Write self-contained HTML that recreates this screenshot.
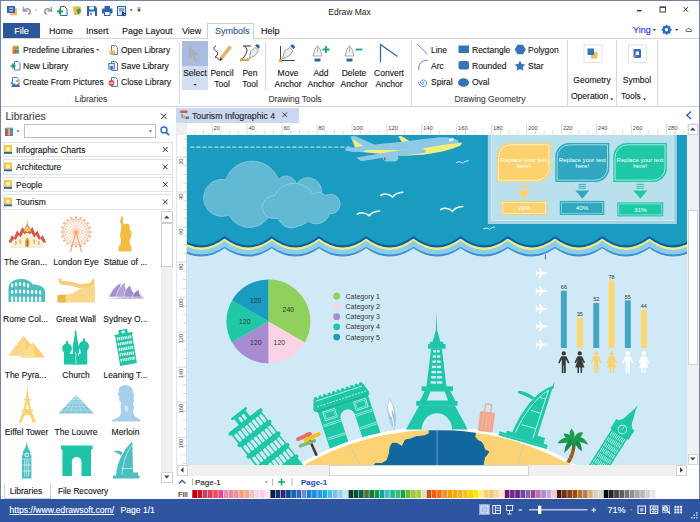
<!DOCTYPE html>
<html><head><meta charset="utf-8"><title>Edraw Max</title>
<style>
*{box-sizing:border-box;margin:0;padding:0}
html,body{width:700px;height:522px;overflow:hidden;background:#fff}
body{position:relative;font-family:"Liberation Sans",sans-serif;font-size:8.5px;color:#161616;}
.a{position:absolute;white-space:nowrap}
.t{position:absolute;white-space:nowrap;line-height:10px;height:10px;-webkit-text-stroke:.12px}
.c{text-align:center}
.sep{position:absolute;width:1px;background:#d8d8d8}
</style></head><body>
<!-- window frame -->
<div class="a" style="left:0;top:0;width:700px;height:522px;border:1px solid #6f82b0"></div>
<!-- title -->
<div class="t c" style="left:299.500px;width:100px;top:7px;font-size:8.500px;-webkit-text-stroke:0">Edraw Max</div>
<!-- menu row -->
<div class="a" style="left:3px;top:23px;width:37px;height:15.300px;background:#2b579a"></div>
<div class="t c" style="left:3px;width:37px;top:26px;color:#fff;font-size:9px">File</div>
<div class="t" style="left:49px;top:26px;font-size:9px">Home</div>
<div class="t" style="left:86px;top:26px;font-size:9px">Insert</div>
<div class="t" style="left:122px;top:26px;font-size:9px">Page Layout</div>
<div class="t" style="left:182px;top:26px;font-size:9px">View</div>
<div class="a" style="left:207px;top:23px;width:47px;height:16px;border:1px solid #d0d0d0;border-bottom:none;background:#fff"></div>
<div class="t" style="left:215px;top:26px;font-size:9px;color:#2b579a">Symbols</div>
<div class="t" style="left:261px;top:26px;font-size:9px">Help</div>
<div class="a" style="left:1px;top:38.300px;width:698px;height:1px;background:#d4d4d4"></div>
<div class="a" style="left:208px;top:38px;width:45px;height:1.500px;background:#fff"></div>
<!-- ribbon placeholder -->

<!-- title bar icons -->
<svg class="a" style="left:0;top:0" width="700" height="40" viewBox="0 0 700 40">
 <!-- edraw logo -->
 <path d="M13 8.300h4v7h-7v-2h3z" fill="#f3bc55"/>
 <rect x="7" y="6" width="8" height="7" fill="#2d66b8"/><rect x="9.200" y="7.600" width="3.800" height="1.200" fill="#c9d8ef"/><rect x="9.200" y="10.200" width="3.800" height="1.200" fill="#c9d8ef"/>
 <!-- undo -->
 <path d="M23.5 7v4h4M24 10.8c1-2.6 5.6-3 6.2 0.4c.3 1.6-.8 2.8-2.2 3.1" fill="none" stroke="#9a9a9a" stroke-width="1.5"/>
 <path d="M34.5 9.5h3l-1.5 1.6z" fill="#aaa"/>
 <!-- redo -->
 <path d="M51.5 7v4h-4M51 10.8c-1-2.6-5.6-3-6.2 0.4c-.3 1.6.8 2.8 2.2 3.1" fill="none" stroke="#9a9a9a" stroke-width="1.5"/>
 <!-- new -->
 <path d="M60.5 6.5h4l2.5 2.5v6.5h-6.5z" fill="#fff" stroke="#2d62b4" stroke-width="1"/>
 <path d="M57 11.5h6M60 8.5v6" stroke="#1aa260" stroke-width="2"/>
 <!-- open -->
 <path d="M72.5 7l5-1 4 1.5-1 7-6 .5z" fill="#f0b84a"/>
 <path d="M76 11l3-3 2.5 3.5-2 .2v2.3h-2v-2.5z" fill="#2a9d57"/>
 <!-- save -->
 <path d="M87 6h8l2 2v8H87z" fill="#2d62b4"/>
 <rect x="89.3" y="6.5" width="4.6" height="3" fill="#fff"/><rect x="89" y="11.5" width="6" height="4.5" fill="#fff"/><rect x="90.3" y="12.6" width="1.4" height="2.4" fill="#2d62b4"/>
 <!-- print -->
 <rect x="104.5" y="6" width="5.5" height="3" fill="#2d62b4"/><rect x="102" y="8.5" width="10.5" height="5" rx="1" fill="#2d62b4"/><rect x="104.5" y="11.5" width="5.5" height="4" fill="#fff" stroke="#2d62b4" stroke-width="1"/>
 <!-- export -->
 <rect x="117.5" y="6.5" width="8" height="9" fill="#dfe8f6" stroke="#2d62b4" stroke-width="1"/><rect x="119" y="8" width="5" height="3.5" fill="#7fa3d8"/><path d="M122 11l4 3-2 .3 .8 1.8-1 .4-.8-1.8-1.2 1z" fill="#1d3f7a"/>
 <path d="M129.7 9.6h3l-1.5 1.7z" fill="#333"/>
 <path d="M137.5 8h3M137.6 9.8h2.8l-1.4 1.6z" stroke="#333" stroke-width=".8" fill="#333"/>
 <!-- window controls -->
 <rect x="637" y="10" width="4.5" height="1.4" fill="#333"/>
 <rect x="660" y="7" width="5.5" height="5" fill="none" stroke="#444" stroke-width="1"/><rect x="660" y="6.6" width="5.5" height="1.3" fill="#444"/>
 <path d="M683.5 7l4.6 4.8M688.1 7l-4.6 4.8" stroke="#333" stroke-width="1"/>
 <!-- ying etc -->
 <path d="M652.7 29h3.2l-1.6 1.9z" fill="#223a80"/>
 <g transform="translate(666.6,29.8)"><circle r="3.1" fill="none" stroke="#2b6cc4" stroke-width="1.9"/><g stroke="#2b6cc4" stroke-width="1.7"><path d="M0-5V5M-5 0H5M-3.5-3.5L3.5 3.5M-3.5 3.5L3.5-3.5"/></g><circle r="1.7" fill="#fff"/><circle r="3" fill="none" stroke="#2b6cc4" stroke-width="1.6"/></g>
 <path d="M675.2 29h3.2l-1.6 1.9z" fill="#223a80"/>
 <path d="M686.2 31.5c-.8-1 0-2.2 1-2 .4-1.400 2.800-1.400 3.200 0 1-.2 1.800 1 1 2z" fill="none" stroke="#444" stroke-width=".8"/>
</svg>
<div class="t" style="left:633px;top:25px;font-size:9px;color:#2a2aff">Ying</div>


<!-- ===== RIBBON ===== -->
<div class="sep" style="left:179px;top:42px;height:62px"></div>
<div class="sep" style="left:265px;top:42px;height:48px"></div>
<div class="sep" style="left:411px;top:40px;height:66px"></div>
<div class="sep" style="left:566.500px;top:40px;height:66px"></div>
<div class="sep" style="left:616px;top:40px;height:66px"></div>
<div class="sep" style="left:656.500px;top:40px;height:66px"></div>
<!-- Libraries group -->
<div class="t" style="left:23px;top:45px">Predefine Libraries</div>
<div class="t" style="left:23px;top:61px">New Library</div>
<div class="t" style="left:23px;top:77px">Create From Pictures</div>
<div class="t" style="left:121px;top:45px">Open Library</div>
<div class="t" style="left:121px;top:61px">Save Library</div>
<div class="t" style="left:121px;top:77px">Close Library</div>
<div class="t c" style="left:61px;width:60px;top:94px;color:#444">Libraries</div>
<!-- select -->
<div class="a" style="left:182px;top:41px;width:26px;height:25px;background:#a9bbde"></div>
<div class="a" style="left:182px;top:66px;width:26px;height:24px;background:#d4def2"></div>
<div class="t c" style="left:175px;width:40px;top:68px">Select</div>
<div class="t c" style="left:202px;width:40px;top:68px">Pencil</div>
<div class="t c" style="left:202px;width:40px;top:79px">Tool</div>
<div class="t c" style="left:230px;width:40px;top:68px">Pen</div>
<div class="t c" style="left:230px;width:40px;top:79px">Tool</div>
<div class="t c" style="left:268px;width:40px;top:68px">Move</div>
<div class="t c" style="left:268px;width:40px;top:79px">Anchor</div>
<div class="t c" style="left:301px;width:40px;top:68px">Add</div>
<div class="t c" style="left:301px;width:40px;top:79px">Anchor</div>
<div class="t c" style="left:334px;width:40px;top:68px">Delete</div>
<div class="t c" style="left:334px;width:40px;top:79px">Anchor</div>
<div class="t c" style="left:369px;width:40px;top:68px">Convert</div>
<div class="t c" style="left:369px;width:40px;top:79px">Anchor</div>
<div class="t c" style="left:255px;width:80px;top:94px;color:#444">Drawing Tools</div>
<!-- geometry -->
<div class="t" style="left:431px;top:45px">Line</div>
<div class="t" style="left:431px;top:61px">Arc</div>
<div class="t" style="left:431px;top:77px">Spiral</div>
<div class="t" style="left:472px;top:45px">Rectangle</div>
<div class="t" style="left:472px;top:61px">Rounded</div>
<div class="t" style="left:472px;top:77px">Oval</div>
<div class="t" style="left:528px;top:45px">Polygon</div>
<div class="t" style="left:528px;top:61px">Star</div>
<div class="t c" style="left:440px;width:100px;top:94px;color:#444">Drawing Geometry</div>
<div class="t c" style="left:567px;width:50px;top:75px">Geometry</div>
<div class="t" style="left:571px;top:91px">Operation</div>
<div class="t c" style="left:612px;width:50px;top:75px">Symbol</div>
<div class="t" style="left:621px;top:91px">Tools</div>
<svg class="a" style="left:0;top:40px" width="700" height="66" viewBox="0 40 700 66">
 <!-- lib icons -->
 <g id="libico">
 <path d="M13.5 45.5h5.500v8h-5.500z" fill="#e9b44c"/><path d="M12.500 46.500h2v7.500h-2z" fill="#c98a2a"/><rect x="14.500" y="50" width="2.200" height="3.500" fill="#d0443c"/><rect x="16.700" y="50" width="2.200" height="3.500" fill="#3a9ad9"/><rect x="15" y="47" width="3.500" height="2.500" fill="#58b368"/>
 </g>
 <!-- new library -->
 <path d="M14.500 61.500h3.500l2 2v6.500h-5.500z" fill="#fff" stroke="#3a6fc0" stroke-width=".9"/><path d="M10.500 66h5M13 63.500v5" stroke="#1aa260" stroke-width="1.700"/>
 <!-- create from pictures -->
 <path d="M12.500 77.500h4.500l2 2v7h-6.500z" fill="#fff" stroke="#3a6fc0" stroke-width=".9"/><path d="M11 87l3-4 2 2 2-1.500 2 3.500z" fill="#3a6fc0"/><circle cx="17" cy="81" r="1.300" fill="#e9a23b"/><path d="M10.500 83l2-2v4z" fill="#2aa568"/>
 <!-- open library -->
 <path d="M111.500 45.500h4l2 2v7h-6z" fill="#fff" stroke="#3a6fc0" stroke-width=".9"/><rect x="109.500" y="50.500" width="5.500" height="4" fill="#f0b84a"/>
 <!-- save library -->
 <path d="M111.500 61.500h4l2 2v7h-6z" fill="#fff" stroke="#3a6fc0" stroke-width=".9"/><rect x="108.800" y="63.500" width="5.500" height="5.500" fill="#dce6f5" stroke="#3a6fc0" stroke-width=".9"/><rect x="110.300" y="66" width="2.500" height="3" fill="#3a6fc0"/>
 <!-- close library -->
 <path d="M111.500 77.500h4l2 2v7h-6z" fill="#fff" stroke="#3a6fc0" stroke-width=".9"/><circle cx="111.500" cy="83" r="2.900" fill="#e0454f"/><rect x="109.700" y="82.500" width="3.600" height="1.100" fill="#fff"/>
 <path d="M96.200 49h3l-1.500 1.700z" fill="#333"/>
 <!-- select arrow -->
 <path d="M188.500 44.500v16l4-3.800 2.700 5.800 2.300-1-2.700-5.600 5.500-.4z" fill="#aab0bb" stroke="#b9c0cc" stroke-width=".6"/>
 <path d="M193.500 84h3.200l-1.600 1.800z" fill="#223"/>
 <!-- pencil -->
 <path d="M216 46c-3 1-2.500 4 0 5 3 1.500 1.500 5 -1 6 2 .5 3.500 1.500 4.500 3" fill="none" stroke="#333" stroke-width="1"/>
 <path d="M229 45.500l3 2-9.500 12-3.300 1.500 .6-3.600z" fill="#e4b062"/><path d="M219.600 61l.7-3.600 2.400 2z" fill="#333"/>
 <!-- pen tool -->
 <path d="M243 46h8M244 46c6 3 2 10-3.500 14" fill="none" stroke="#333" stroke-width="1"/>
 <path d="M240 60h9" stroke="#333" stroke-width=".8"/><rect x="240" y="58.500" width="2.600" height="2.600" fill="#f0a020"/><rect x="246.500" y="58.500" width="2.600" height="2.600" fill="#f0a020"/>
 <path d="M249.500 58.500l1-7 4.500-4 3.500 3-3.500 5z" fill="#eee" stroke="#888" stroke-width=".8"/><path d="M255 45.500l2.500-1.500 2.500 2.500-1.500 2.500z" fill="#2d62b4"/>
 <!-- move anchor -->
 <path d="M280.500 46v14.500H295" fill="none" stroke="#444" stroke-width="1"/><rect x="279" y="59" width="3" height="3" fill="#f0a020"/>
 <path d="M282.500 59l2-8 5.500-3.500 3 3.500-4 5z" fill="#eee" stroke="#888" stroke-width=".8"/><path d="M290 45.500l2.800-1.300 2.400 2.800-1.700 2.200z" fill="#2d62b4"/>
 <!-- add anchor -->
 <path d="M313 56l1.800-6.500 2.700-4 2.700 4 1.800 6.500z" fill="#f2f2f2" stroke="#999" stroke-width=".8"/><path d="M317.500 47v5" stroke="#999" stroke-width=".7"/><rect x="314.500" y="58.500" width="6" height="3" fill="#2d62b4"/>
 <path d="M322.500 49.500h7M326 46v7" stroke="#17a589" stroke-width="1.800"/>
 <!-- delete anchor -->
 <path d="M345 56l1.800-6.500 2.700-4 2.700 4 1.800 6.500z" fill="#f2f2f2" stroke="#999" stroke-width=".8"/><path d="M349.500 47v5" stroke="#999" stroke-width=".7"/><rect x="346.500" y="58.500" width="6" height="3" fill="#2d62b4"/>
 <path d="M355.500 49.500h7" stroke="#17a589" stroke-width="1.800"/>
 <!-- convert anchor -->
 <path d="M380.500 62.500v-18l17 12" fill="none" stroke="#2e62ad" stroke-width="1.200"/>
 <!-- geometry icons -->
 <path d="M417.500 44.500l10 9.500" stroke="#3a6fc0" stroke-width=".8"/>
 <path d="M419 70c-1.500-5 3-10.500 8.500-9.500" fill="none" stroke="#3a6fc0" stroke-width=".9"/>
 <path d="M422.500 82.500c.8-.8 2 .4 1 1.300-1.400 1.200-3.400-.3-2.800-2 .8-2.200 4-2.300 5.300-.3 1.400 2.300-.4 5-3 5-2.700 0-4.700-2.300-4.300-4.700" fill="none" stroke="#3a6fc0" stroke-width=".8"/>
 <rect x="458.500" y="45.500" width="10.500" height="7.500" fill="#3674b8"/>
 <rect x="458.500" y="61" width="10.500" height="8.500" rx="2" fill="#3674b8"/>
 <ellipse cx="463.500" cy="82.500" rx="5.500" ry="4.300" fill="#3674b8"/>
 <path d="M517.500 44.800h5.500l2.800 4.700-2.800 4.700h-5.500l-2.800-4.700z" fill="#3674b8"/>
 <path d="M520 60.500l1.650 3.400 3.750.5-2.700 2.650.65 3.750-3.350-1.800-3.350 1.800.65-3.750-2.700-2.650 3.750-.5z" fill="#3674b8"/>
 <!-- geometry operation -->
 <rect x="584" y="45" width="18" height="17.500" fill="#fff" stroke="#ddd" stroke-width=".8"/>
 <rect x="591" y="52" width="6.500" height="6.500" fill="#f0c060"/><rect x="587.500" y="48.500" width="6.500" height="6.500" fill="#3674b8"/>
 <path d="M610.200 98.500h3.200l-1.600 1.800z" fill="#223"/>
 <!-- symbol tools -->
 <rect x="628.500" y="45" width="18" height="17.500" fill="#fff" stroke="#ddd" stroke-width=".8"/>
 <rect x="633.500" y="49" width="7.500" height="9" rx="1.300" fill="#2e6fc9"/><path d="M636 51.500h3v3.500h-3.500z" fill="#fff"/><path d="M632.500 56.500l3-1.500v2.500z" fill="#f0a020"/>
 <path d="M643 98.500h3.200l-1.600 1.800z" fill="#223"/>
</svg>

<div class="a" style="left:1px;top:106px;width:698px;height:1px;background:#d0d0d0"></div>
<!-- left panel -->

<!-- ===== LEFT PANEL ===== -->
<div class="t" style="left:5.500px;top:110px;font-size:10.500px;line-height:12px;height:12px;color:#444">Libraries</div>
<div class="a" style="left:24px;top:124px;width:132px;height:14px;border:1px solid #bdbdbd;background:#fff"></div>
<div class="a" style="left:2.500px;top:141.500px;width:170px;height:15.500px;border:1px solid #e2e2e2;background:#fff"></div>
<div class="a" style="left:2.500px;top:159px;width:170px;height:15.500px;border:1px solid #e2e2e2;background:#fff"></div>
<div class="a" style="left:2.500px;top:176.500px;width:170px;height:15.500px;border:1px solid #e2e2e2;background:#fff"></div>
<div class="a" style="left:2.500px;top:194px;width:170px;height:15.500px;border:1px solid #e2e2e2;background:#fff"></div>
<div class="t" style="left:16px;top:144.500px">Infographic Charts</div>
<div class="t" style="left:16px;top:162px">Architecture</div>
<div class="t" style="left:16px;top:179.500px">People</div>
<div class="t" style="left:16px;top:197px">Tourism</div>
<!-- scrollbar -->
<div class="a" style="left:161px;top:211px;width:11.500px;height:272px;background:#f0f0f0"></div>
<div class="a" style="left:161px;top:211px;width:11.500px;height:12px;background:#fff;border:1px solid #d0d0d0"></div>
<div class="a" style="left:161px;top:222.500px;width:11.500px;height:44.500px;background:#fff;border:1px solid #d0d0d0"></div>
<div class="a" style="left:161px;top:471.500px;width:11.500px;height:11.500px;background:#fff;border:1px solid #d0d0d0"></div>
<!-- labels -->
<div class="t c" style="left:0;width:51px;top:256.800px">The Gran...</div>
<div class="t c" style="left:50px;width:52px;top:256.800px">London Eye</div>
<div class="t c" style="left:100px;width:51px;top:256.800px">Statue of ...</div>
<div class="t c" style="left:0;width:51px;top:314px">Rome Col...</div>
<div class="t c" style="left:50px;width:52px;top:314px">Great Wall</div>
<div class="t c" style="left:100px;width:51px;top:314px">Sydney O...</div>
<div class="t c" style="left:0;width:51px;top:370px">The Pyra...</div>
<div class="t c" style="left:50px;width:52px;top:370px">Church</div>
<div class="t c" style="left:100px;width:51px;top:370px">Leaning T...</div>
<div class="t c" style="left:0;width:53px;top:427px">Eiffel Tower</div>
<div class="t c" style="left:50px;width:52px;top:427px">The Louvre</div>
<div class="t c" style="left:100px;width:51px;top:427px">Merloin</div>
<!-- bottom tabs -->
<div class="a" style="left:4px;top:483px;width:47px;height:16px;border:1px solid #d0d0d0;border-top:none;background:#fff"></div>
<div class="t c" style="left:2.500px;width:47px;top:486px">Libraries</div>
<div class="t" style="left:58px;top:485.500px;font-size:8.300px;letter-spacing:-.05px">File Recovery</div>
<svg class="a" style="left:0;top:108px" width="176" height="391" viewBox="0 108 176 391">
 <!-- panel close -->
 <path d="M161 113.500l5.500 5.500M166.500 113.500l-5.500 5.500" stroke="#333" stroke-width="1"/>
 <!-- lib icon -->
 <rect x="5" y="128" width="8" height="8" fill="#3a6fc0"/><rect x="5.500" y="130" width="2.300" height="5.500" fill="#e04a4a"/><rect x="7.800" y="129" width="2.300" height="6.500" fill="#f0b030"/><rect x="10.100" y="130" width="2.400" height="5.500" fill="#5a8fd8"/><path d="M5 128l3-1.500 2 1 3-1v2H5z" fill="#c8d4ea"/>
 <path d="M16.500 130.500h3l-1.500 1.700z" fill="#444"/>
 <path d="M149 130.500h3l-1.500 1.700z" fill="#444"/>
 <circle cx="164" cy="130" r="3" fill="none" stroke="#2b6cc4" stroke-width="1.400"/><path d="M166.200 132.300l2.800 2.900" stroke="#2b6cc4" stroke-width="1.800"/>
 <!-- row icons -->
 <g id="ri"><rect x="4" y="145" width="8" height="8.500" fill="#f3c64e"/><rect x="4" y="152" width="8" height="1.800" fill="#2d62b4"/><path d="M6.200 147h3.600v3l-1.800 1.200-1.800-1.200z" fill="#fdf3d0"/></g>
 <use href="#ri" y="17.500"/><use href="#ri" y="35"/><use href="#ri" y="52.500"/>
 <g stroke="#333" stroke-width="1"><path d="M163 147l4.600 4.800M167.600 147l-4.600 4.800"/><path d="M163 164.500l4.600 4.800M167.600 164.500l-4.600 4.800"/><path d="M163 182l4.600 4.800M167.600 182l-4.600 4.800"/><path d="M163 199.500l4.600 4.800M167.600 199.500l-4.600 4.800"/></g>
 <path d="M164 218.500h5.500l-2.750-3z" fill="#444"/>
 <path d="M164 475.500h5.500l-2.750 3z" fill="#444"/>
 <g id="thumbs">
 <!-- grand palace -->
 <path d="M10.500 246.300h33.500v1.300H10.500z" fill="#f3dcb4"/>
 <path d="M8.800 241.500l3.200-6.500 2 2.800 3-7.300 2.500 3 2.700-6.500 2 2.500 3.100-6 3.100 6 2-2.500 2.700 6.500 2.500-3 3 7.300 2-2.800 3.200 6.500z" fill="#d9534f"/>
 <path d="M12 246.500v-5.500l2.500-2.500 1 1.500 3-5 2 2.500 2.800-5 1.500 2 2.500-4.500 2.500 4.500 1.500-2 2.800 5 2-2.500 3 5 1-1.500 2.500 2.500v5.500z" fill="#fdf0dc"/>
 <path d="M27.300 219.500l.9 5.500h-1.800z" fill="#f0b84a"/>
 <path d="M23.300 231.500l4-6.500 4 6.500z" fill="#f6c860"/>
 <rect x="24.500" y="231.800" width="5.600" height="1.300" fill="#b07a28"/>
 <path d="M25.300 246.500v-6.500l2-2.500 2 2.500v6.500z" fill="#e0a038"/><rect x="26.600" y="240.500" width="1.400" height="6" fill="#a86a1c"/>
 <g fill="#f0b84a"><rect x="15" y="241" width="1.800" height="3.800"/><rect x="19.500" y="239.500" width="1.800" height="4"/><rect x="33.300" y="239.500" width="1.800" height="4"/><rect x="37.800" y="241" width="1.800" height="3.800"/></g>
 <g fill="#d9534f"><path d="M8.500 242.500l1.800-3.500 1.800 3.500z"/><path d="M42.500 242.500l1.800-3.500 1.800 3.500z"/></g>
 <!-- london eye -->
 <g fill="none" stroke="#f2a877" stroke-width=".8"><circle cx="76" cy="232" r="13"/><circle cx="76" cy="232" r="11" stroke-width=".5"/><path d="M76 232L88.0 232.0M76 232L87.6 235.1M76 232L86.4 238.0M76 232L84.5 240.5M76 232L82.0 242.4M76 232L79.1 243.6M76 232L76.0 244.0M76 232L72.9 243.6M76 232L70.0 242.4M76 232L67.5 240.5M76 232L65.6 238.0M76 232L64.4 235.1M76 232L64.0 232.0M76 232L64.4 228.9M76 232L65.6 226.0M76 232L67.5 223.5M76 232L70.0 221.6M76 232L72.9 220.4M76 232L76.0 220.0M76 232L79.1 220.4M76 232L82.0 221.6M76 232L84.5 223.5M76 232L86.4 226.0M76 232L87.6 228.9" stroke-width=".45"/></g><circle cx="90.6" cy="232.0" r="1.1" fill="#f2a877"/><circle cx="89.9" cy="236.5" r="1.1" fill="#f2a877"/><circle cx="87.8" cy="240.6" r="1.1" fill="#f2a877"/><circle cx="84.6" cy="243.8" r="1.1" fill="#f2a877"/><circle cx="80.5" cy="245.9" r="1.1" fill="#f2a877"/><circle cx="76.0" cy="246.6" r="1.1" fill="#f2a877"/><circle cx="71.5" cy="245.9" r="1.1" fill="#f2a877"/><circle cx="67.4" cy="243.8" r="1.1" fill="#f2a877"/><circle cx="64.2" cy="240.6" r="1.1" fill="#f2a877"/><circle cx="62.1" cy="236.5" r="1.1" fill="#f2a877"/><circle cx="61.4" cy="232.0" r="1.1" fill="#f2a877"/><circle cx="62.1" cy="227.5" r="1.1" fill="#f2a877"/><circle cx="64.2" cy="223.4" r="1.1" fill="#f2a877"/><circle cx="67.4" cy="220.2" r="1.1" fill="#f2a877"/><circle cx="71.5" cy="218.1" r="1.1" fill="#f2a877"/><circle cx="76.0" cy="217.4" r="1.1" fill="#f2a877"/><circle cx="80.5" cy="218.1" r="1.1" fill="#f2a877"/><circle cx="84.6" cy="220.2" r="1.1" fill="#f2a877"/><circle cx="87.8" cy="223.4" r="1.1" fill="#f2a877"/><circle cx="89.9" cy="227.5" r="1.1" fill="#f2a877"/><path d="M76 232L70.5 252M76 232L81.5 252" stroke="#f2a877" stroke-width="1.2"/><circle cx="76" cy="232" r="1.6" fill="#f2a877"/>
 <!-- statue of liberty -->
 <path d="M121.500 216l1.500 1v6l1.500 1.500 2-1 2 .5 1.500 2.500-.5 2.500 2 3-.5 5-1.500 4 .5 4 1.500 1v5.500h-13v-5.500l2-1 .5-5-1-5 1-6 .5-4-1.500-3.500z" fill="#f6bb42"/>
 <!-- colosseum -->
 <path d="M8.500 302v-14c0-5 5-9 12-9 6 0 10 2 12.500 5.500 6 0 12 2 12 7.500v10z" fill="#4bbfc0"/>
 <g fill="#fff"><rect x="11" y="283.500" width="2.200" height="4" rx="1"/><rect x="15" y="282.500" width="2.200" height="4" rx="1"/><rect x="19" y="282" width="2.200" height="4" rx="1"/><rect x="23" y="282.500" width="2.200" height="4" rx="1"/><rect x="27" y="283.500" width="2.200" height="4" rx="1"/>
 <rect x="11" y="290" width="2.200" height="4" rx="1"/><rect x="15" y="289.500" width="2.200" height="4" rx="1"/><rect x="19" y="289.500" width="2.200" height="4" rx="1"/><rect x="23" y="289.500" width="2.200" height="4" rx="1"/><rect x="27" y="290" width="2.200" height="4" rx="1"/><rect x="31" y="290" width="2.200" height="4" rx="1"/><rect x="35" y="290" width="2.200" height="4" rx="1"/><rect x="39" y="290.500" width="2.200" height="4" rx="1"/>
 <rect x="11" y="296.500" width="2.200" height="5.500" rx="1"/><rect x="15" y="296.500" width="2.200" height="5.500" rx="1"/><rect x="19" y="296.500" width="2.200" height="5.500" rx="1"/><rect x="23" y="296.500" width="2.200" height="5.500" rx="1"/><rect x="27" y="296.500" width="2.200" height="5.500" rx="1"/><rect x="31" y="296.500" width="2.200" height="5.500" rx="1"/><rect x="35" y="296.500" width="2.200" height="5.500" rx="1"/><rect x="39" y="296.500" width="2.200" height="5.500" rx="1"/></g>
 <!-- great wall -->
 <path d="M57.500 295l14-1 8-5 13.500-4.500 2 .5v17.500H57.500z" fill="#f9d88c"/>
 <path d="M57.500 295h8v7.500h-8z" fill="#e8b84e"/>
 <path d="M58 279l2.500-.8 1 2.500 10 1 8 2.500 9-1 3-1.500v-2.500l1.500.5.500-1 1 .5v5l-6 3-9 1-8-2.500-10-1-2.500-2z" fill="#f6cd7a"/>
 <!-- sydney opera -->
 <path d="M107.500 298.500h36v-1l-7-1.500z" fill="#a68fd0"/>
 <g stroke="#fff" stroke-width=".5"><path d="M109 297c2-6 6-11 12-14-1 5-1 9 0 14z" fill="#a68fd0"/><path d="M116 297c1-6 4-11 9-15 0 5 1 10 4 15z" fill="#b49fdb"/><path d="M124 297c0-5 2-9 6-12 1 4 3 8 7 12z" fill="#a68fd0"/><path d="M132 297c1-3 3-6 7-7.500-.5 3 1 5.500 3.500 7.500z" fill="#9a82c8"/></g>
 <!-- pyramids -->
 <path d="M8.500 355.500l15-19.500 12 13.500-9.500 6z" fill="#fbd174"/><path d="M23.500 336l3 19.500h-18z" fill="#fcd98a"/>
 <path d="M20.500 357.500l12.500-15 12 15z" fill="#fbd174"/><path d="M33 342.500l2 15h-14.500z" fill="#fcdc92"/>
 <!-- church -->
 <g fill="#1fc3a5">
 <path d="M75.700 329l.5 2.500.9.600-.7.800 2.200 13.500h-5.800l2.200-13.500-.7-.800.900-.600z"/>
 <rect x="72.800" y="346" width="6.400" height="18.500"/>
 <path d="M67.900 341.300l.4 2.300c2 .6 3.600 2.600 3.600 4.900 0 1.700-.8 3-1.700 3.700v12.300h-6.300v-12.300c-.900-.700-1.700-2-1.700-3.700 0-2.300 1.600-4.300 3.600-4.900l.4-2.300.85-.6z"/>
 <path d="M84.700 338.500l.4 2.600c2.200.6 3.900 2.700 3.900 5.200 0 1.700-.8 3.100-1.700 3.900v14.300h-6.800v-14.300c-.900-.800-1.700-2.200-1.700-3.900 0-2.500 1.700-4.600 3.900-5.200l.4-2.600.8-.6z"/>
 <rect x="70" y="354" width="11" height="10.500"/>
 </g>
 <path d="M75.200 352l.8 3-.6 3 .7 3-.3 3.500M78.300 353l.5 3" stroke="#fff" stroke-width=".6" fill="none"/>
 <!-- leaning tower -->
 <g transform="rotate(-9.500 128.500 364.300)">
 <rect x="120" y="333.500" width="17" height="31" fill="#1fc3a5"/>
 <rect x="124" y="329" width="9" height="5" fill="#1fc3a5"/>
 <rect x="119.300" y="333" width="18.400" height="1.600" fill="#1fc3a5"/>
 <rect x="127" y="330.300" width="3" height="2.500" fill="#fff"/>
 <g fill="#fff"><rect x="121.300" y="336" width="14.400" height="3"/><rect x="121.300" y="341.400" width="14.400" height="3"/><rect x="121.300" y="346.800" width="14.400" height="3"/><rect x="121.300" y="352.200" width="14.400" height="3"/><rect x="121.300" y="357.600" width="14.400" height="3"/></g>
 <path d="M123.100 335.500v26M124.900 335.500v26M126.700 335.500v26M128.500 335.500v26M130.300 335.500v26M132.100 335.500v26M133.900 335.500v26" stroke="#1fc3a5" stroke-width=".7"/>
 </g>
 <!-- eiffel -->
 <path d="M27.300 385l.5 6 1.200 8h1.500v1.500h-1.200l1.700 9h2v1.500h-1.600l4.600 11.500h-3.500c-1-5-2.500-8-5.200-8s-4.200 3-5.200 8h-3.500l4.600-11.500h-1.600v-1.500h2l1.700-9h-1.200v-1.500h1.500l1.200-8z" fill="#fbd174"/>
 <path d="M27.300 403l1.500 6h-3z" fill="#fff"/>
 <!-- louvre -->
 <path d="M58.500 413.500l17.500-18.500 18 18.500z" fill="#86c8dc"/>
 <g stroke="#fff" stroke-width=".35" opacity=".8"><path d="M76 395l-12 18.500M76 395l-6 18.500M76 395v18.500M76 395l6 18.500M76 395l12 18.500M72 399.500h8M68.500 403h15M65.500 406.500h21M62 410h28"/></g>
 <!-- merlion -->
 <path d="M119 388c2-3 7-4 10-2 3 1 4.500 4 4 7l1.500 2-1 3 1 3-1.500 2.500 1 3.500-1 5 1.500 4 6 4v1.500h-28.500v-1.500l7-3 2.500-5-1-5 1-4-2.500-3 .5-3.500-2-2 1.500-3.500z" fill="#a5cfea"/>
 <path d="M124 406c2-1 4 0 4.500 2s-1 4-3 4z" fill="#d4e8f6"/>
 <!-- big ben -->
 <path d="M26.800 441.500l.8 5 2.800 5.500v3h1v23.500h-9.500v-23.500h1v-3l2.800-5.500z" fill="#4bbfc0"/>
 <circle cx="26.800" cy="455" r="2.300" fill="#fff"/><circle cx="26.800" cy="455" r="1.500" fill="#4bbfc0"/>
 <g stroke="#fff" stroke-width=".6"><path d="M24.800 460v16.500M26.800 460v16.500M28.800 460v16.500M22.500 459h8.500M22.500 465h8.500M22.500 471h8.500"/></g>
 <!-- arc de triomphe -->
 <path d="M61 445.500h31.500v4h-1.500v26.500h-9.500v-14c0-3-2-5-4.800-5s-4.800 2-4.800 5v14h-9.500v-26.500H61z" fill="#1fc3a5"/>
 <!-- burj al arab -->
 <path d="M132.300 441.500l.7 31h5v3h1.500v3h-26.500v-3h3c1-12 6-24 16.300-34z" fill="#4bbfc0"/>
 <path d="M113.500 451.500c3-1.500 7-1 9 1l-1.500 3c-2-2-5-3-7.500-4z" fill="#4bbfc0"/>
 <g stroke="#fff" stroke-width=".6" opacity=".9" fill="none"><path d="M121.500 468.500h11M132 445c-6 8-9 18-10 30"/></g>
</g>
</svg>

<!-- doc area -->
<div class="a" style="left:175.500px;top:108px;width:123.500px;height:14.500px;background:#ccd8f0"></div>
<div class="t" style="left:192px;top:110.500px;font-size:8.700px;color:#222">Tourism Infographic 4</div>
<div class="a" style="left:176px;top:123px;width:511px;height:11.500px;background:#fff"></div>
<div class="a" style="left:176px;top:123px;width:11px;height:11.500px;background:#eee"></div>
<div class="a" style="left:176px;top:134.500px;width:10.700px;height:330px;background:#fff;border-left:1px solid #e4e4e4;border-right:1px solid #e0e0e0"></div>
<div class="a" style="left:687px;top:123px;width:11.500px;height:342px;background:#f0f0f0"></div>
<div class="a" style="left:687.500px;top:123.500px;width:10.500px;height:11px;background:#fff;border:1px solid #d4d4d4"></div>
<div class="a" style="left:687.500px;top:209.500px;width:10.500px;height:155.500px;background:#fff;border:1px solid #d4d4d4"></div>
<div class="a" style="left:687.500px;top:453.500px;width:10.500px;height:11px;background:#fff;border:1px solid #d4d4d4"></div>
<div class="a" style="left:176px;top:464.500px;width:511px;height:11px;background:#f0f0f0"></div>
<div class="a" style="left:176.500px;top:464.500px;width:11px;height:11px;background:#fff;border:1px solid #d4d4d4"></div>
<div class="a" style="left:328.500px;top:464.500px;width:200.500px;height:11px;background:#fff;border:1px solid #d4d4d4"></div>
<div class="a" style="left:676px;top:464.500px;width:11px;height:11px;background:#fff;border:1px solid #d4d4d4"></div>
<div class="t" style="left:195px;top:478px;font-size:8px;color:#222">Page-1</div>
<div class="t" style="left:301px;top:478px;font-size:8px;color:#2b57c0;font-weight:bold">Page-1</div>
<div class="t" style="left:178px;top:489.500px;font-size:7.500px;color:#222">Fill</div>
<svg class="a" style="left:170px;top:106px" width="530" height="416" viewBox="170 106 530 416"><rect x="180" y="110.500" width="7.500" height="2.600" rx=".8" fill="#d0595a"/><rect x="181.500" y="114" width="1.200" height="4" fill="#2aa568"/><rect x="182.500" y="115.500" width="3" height="3" fill="#f0b030"/><rect x="185.500" y="116.500" width="3.500" height="2.500" fill="#3a7be0"/><path d="M282.500 112.500l4.500 4.600M287 112.500l-4.500 4.600" stroke="#333" stroke-width=".9"/><path d="M691.200 111.600l-4.400 3.700 4.400 3.700" fill="none" stroke="#2b57a8" stroke-width="1.300"/><path d="M194.7 130.500V134.500M203.5 130.500V134.500M212.2 124V134.500M220.9 130.500V134.500M229.7 130.500V134.500M238.4 130.500V134.500M247.1 124V134.500M255.9 130.500V134.500M264.6 130.500V134.500M273.3 130.500V134.500M282.1 124V134.500M290.8 130.500V134.500M299.5 130.500V134.500M308.3 130.500V134.500M317.0 124V134.500M325.8 130.500V134.500M334.5 130.500V134.500M343.2 130.500V134.500M352.0 124V134.500M360.7 130.500V134.500M369.4 130.500V134.500M378.2 130.500V134.500M386.9 124V134.500M395.6 130.500V134.500M404.4 130.500V134.500M413.1 130.500V134.500M421.8 124V134.500M430.6 130.500V134.500M439.3 130.500V134.500M448.0 130.500V134.500M456.8 124V134.500M465.5 130.500V134.500M474.2 130.500V134.500M483.0 130.500V134.500M491.7 124V134.500M500.5 130.500V134.500M509.2 130.500V134.500M517.9 130.500V134.500M526.7 124V134.500M535.4 130.500V134.500M544.1 130.500V134.500M552.9 130.500V134.500M561.6 124V134.500M570.3 130.500V134.500M579.1 130.500V134.500M587.8 130.500V134.500M596.5 124V134.500M605.3 130.500V134.500M614.0 130.500V134.500M622.7 130.500V134.500M631.5 124V134.500M640.2 130.500V134.500M649.0 130.500V134.500M657.7 130.500V134.500M666.4 124V134.500M675.2 130.500V134.500M683.9 130.500V134.500" stroke="#c8c8c8" stroke-width=".7"/><text x="213.5" y="130" font-size="5.800" fill="#484848" font-family="Liberation Sans, sans-serif">20</text><text x="248.4" y="130" font-size="5.800" fill="#484848" font-family="Liberation Sans, sans-serif">40</text><text x="283.4" y="130" font-size="5.800" fill="#484848" font-family="Liberation Sans, sans-serif">60</text><text x="318.3" y="130" font-size="5.800" fill="#484848" font-family="Liberation Sans, sans-serif">80</text><text x="353.3" y="130" font-size="5.800" fill="#484848" font-family="Liberation Sans, sans-serif">100</text><text x="388.2" y="130" font-size="5.800" fill="#484848" font-family="Liberation Sans, sans-serif">120</text><text x="423.1" y="130" font-size="5.800" fill="#484848" font-family="Liberation Sans, sans-serif">140</text><text x="458.1" y="130" font-size="5.800" fill="#484848" font-family="Liberation Sans, sans-serif">160</text><text x="493.0" y="130" font-size="5.800" fill="#484848" font-family="Liberation Sans, sans-serif">180</text><text x="528.0" y="130" font-size="5.800" fill="#484848" font-family="Liberation Sans, sans-serif">200</text><text x="562.9" y="130" font-size="5.800" fill="#484848" font-family="Liberation Sans, sans-serif">220</text><text x="597.8" y="130" font-size="5.800" fill="#484848" font-family="Liberation Sans, sans-serif">240</text><text x="632.8" y="130" font-size="5.800" fill="#484848" font-family="Liberation Sans, sans-serif">260</text><text x="667.7" y="130" font-size="5.800" fill="#484848" font-family="Liberation Sans, sans-serif">280</text><path d="M183 139.4H187M183 148.2H187M177 156.9H187M183 165.7H187M183 174.5H187M183 183.2H187M177 192.0H187M183 200.8H187M183 209.5H187M183 218.3H187M177 227.1H187M183 235.8H187M183 244.6H187M183 253.3H187M177 262.1H187M183 270.9H187M183 279.6H187M183 288.4H187M177 297.1H187M183 305.9H187M183 314.7H187M183 323.4H187M177 332.2H187M183 341.0H187M183 349.7H187M183 358.5H187M177 367.2H187M183 376.0H187M183 384.8H187M183 393.5H187M177 402.3H187M183 411.1H187M183 419.8H187M183 428.6H187M177 437.3H187M183 446.1H187M183 454.9H187M183 463.6H187" stroke="#c8c8c8" stroke-width=".7"/><text transform="translate(182.800 158.4) rotate(-90)" text-anchor="end" font-size="5.800" fill="#484848" font-family="Liberation Sans, sans-serif">20</text><text transform="translate(182.800 193.5) rotate(-90)" text-anchor="end" font-size="5.800" fill="#484848" font-family="Liberation Sans, sans-serif">40</text><text transform="translate(182.800 228.6) rotate(-90)" text-anchor="end" font-size="5.800" fill="#484848" font-family="Liberation Sans, sans-serif">60</text><text transform="translate(182.800 263.6) rotate(-90)" text-anchor="end" font-size="5.800" fill="#484848" font-family="Liberation Sans, sans-serif">80</text><text transform="translate(182.800 298.6) rotate(-90)" text-anchor="end" font-size="5.800" fill="#484848" font-family="Liberation Sans, sans-serif">100</text><text transform="translate(182.800 333.7) rotate(-90)" text-anchor="end" font-size="5.800" fill="#484848" font-family="Liberation Sans, sans-serif">120</text><text transform="translate(182.800 368.8) rotate(-90)" text-anchor="end" font-size="5.800" fill="#484848" font-family="Liberation Sans, sans-serif">140</text><text transform="translate(182.800 403.8) rotate(-90)" text-anchor="end" font-size="5.800" fill="#484848" font-family="Liberation Sans, sans-serif">160</text><text transform="translate(182.800 438.8) rotate(-90)" text-anchor="end" font-size="5.800" fill="#484848" font-family="Liberation Sans, sans-serif">180</text><path d="M690 130.500h5.500l-2.750-3z" fill="#444"/><path d="M690 457.500h5.500l-2.750 3z" fill="#444"/><path d="M183.500 467.300v5.500l-3-2.750z" fill="#444"/><path d="M680 467.300v5.500l3-2.750z" fill="#444"/><path d="M179 483.500l3.200-3.200 3.200 3.200" fill="none" stroke="#2b57a8" stroke-width="1.300"/><path d="M192.500 478.500v7M272.500 478.500v7M292 478.500v7" stroke="#999" stroke-width=".7"/><path d="M265 481.500h2.600l-1.300 1.500z" fill="#555"/><path d="M278 482h7M281.500 478.500v7" stroke="#1aa260" stroke-width="1.500"/><rect x="192.30" y="490" width="4.71" height="8" fill="#c0000e"/><rect x="197.51" y="490" width="4.71" height="8" fill="#d8101e"/><rect x="202.72" y="490" width="4.71" height="8" fill="#c0456a"/><rect x="207.92" y="490" width="4.71" height="8" fill="#e0405a"/><rect x="213.13" y="490" width="4.71" height="8" fill="#e8505a"/><rect x="218.34" y="490" width="4.71" height="8" fill="#e04a90"/><rect x="223.55" y="490" width="4.71" height="8" fill="#e890b0"/><rect x="228.76" y="490" width="4.71" height="8" fill="#f08a8a"/><rect x="233.96" y="490" width="4.71" height="8" fill="#f090a0"/><rect x="239.17" y="490" width="4.71" height="8" fill="#f8a078"/><rect x="244.38" y="490" width="4.71" height="8" fill="#f0a890"/><rect x="249.59" y="490" width="4.71" height="8" fill="#f8c0c0"/><rect x="254.79" y="490" width="4.71" height="8" fill="#f0d8e8"/><rect x="260.00" y="490" width="4.71" height="8" fill="#fad0e0"/><rect x="265.21" y="490" width="4.71" height="8" fill="#fce4ec"/><rect x="270.42" y="490" width="4.71" height="8" fill="#0a1c50"/><rect x="275.63" y="490" width="4.71" height="8" fill="#1a3070"/><rect x="280.83" y="490" width="4.71" height="8" fill="#2a2878"/><rect x="286.04" y="490" width="4.71" height="8" fill="#0a4898"/><rect x="291.25" y="490" width="4.71" height="8" fill="#0a68b0"/><rect x="296.46" y="490" width="4.71" height="8" fill="#3a60b8"/><rect x="301.67" y="490" width="4.71" height="8" fill="#6a90d0"/><rect x="306.87" y="490" width="4.71" height="8" fill="#1a80d0"/><rect x="312.08" y="490" width="4.71" height="8" fill="#1a90d8"/><rect x="317.29" y="490" width="4.71" height="8" fill="#2aa0e0"/><rect x="322.50" y="490" width="4.71" height="8" fill="#1aa8e8"/><rect x="327.70" y="490" width="4.71" height="8" fill="#4ac0f0"/><rect x="332.91" y="490" width="4.71" height="8" fill="#8ab8e8"/><rect x="338.12" y="490" width="4.71" height="8" fill="#98d0f0"/><rect x="343.33" y="490" width="4.71" height="8" fill="#c8e4f4"/><rect x="348.54" y="490" width="4.71" height="8" fill="#0a4028"/><rect x="353.74" y="490" width="4.71" height="8" fill="#0a5830"/><rect x="358.95" y="490" width="4.71" height="8" fill="#0a6058"/><rect x="364.16" y="490" width="4.71" height="8" fill="#5a7030"/><rect x="369.37" y="490" width="4.71" height="8" fill="#0a7840"/><rect x="374.58" y="490" width="4.71" height="8" fill="#189840"/><rect x="379.78" y="490" width="4.71" height="8" fill="#10a898"/><rect x="384.99" y="490" width="4.71" height="8" fill="#50b8c0"/><rect x="390.20" y="490" width="4.71" height="8" fill="#18c0a0"/><rect x="395.41" y="490" width="4.71" height="8" fill="#40b878"/><rect x="400.61" y="490" width="4.71" height="8" fill="#18a850"/><rect x="405.82" y="490" width="4.71" height="8" fill="#78b818"/><rect x="411.03" y="490" width="4.71" height="8" fill="#98c850"/><rect x="416.24" y="490" width="4.71" height="8" fill="#a8d030"/><rect x="421.45" y="490" width="4.71" height="8" fill="#d0e8c8"/><rect x="426.65" y="490" width="4.71" height="8" fill="#e04818"/><rect x="431.86" y="490" width="4.71" height="8" fill="#f06010"/><rect x="437.07" y="490" width="4.71" height="8" fill="#f07800"/><rect x="442.28" y="490" width="4.71" height="8" fill="#f09040"/><rect x="447.49" y="490" width="4.71" height="8" fill="#f8a000"/><rect x="452.69" y="490" width="4.71" height="8" fill="#ffa800"/><rect x="457.90" y="490" width="4.71" height="8" fill="#ffb020"/><rect x="463.11" y="490" width="4.71" height="8" fill="#ffc020"/><rect x="468.32" y="490" width="4.71" height="8" fill="#ffd000"/><rect x="473.52" y="490" width="4.71" height="8" fill="#ffe800"/><rect x="478.73" y="490" width="4.71" height="8" fill="#fff080"/><rect x="483.94" y="490" width="4.71" height="8" fill="#ffd060"/><rect x="489.15" y="490" width="4.71" height="8" fill="#f0c880"/><rect x="494.36" y="490" width="4.71" height="8" fill="#ffd8a0"/><rect x="499.56" y="490" width="4.71" height="8" fill="#ffe8d0"/><rect x="504.77" y="490" width="4.71" height="8" fill="#701878"/><rect x="509.98" y="490" width="4.71" height="8" fill="#802888"/><rect x="515.19" y="490" width="4.71" height="8" fill="#602890"/><rect x="520.40" y="490" width="4.71" height="8" fill="#7048a0"/><rect x="525.60" y="490" width="4.71" height="8" fill="#9060a8"/><rect x="530.81" y="490" width="4.71" height="8" fill="#984890"/><rect x="536.02" y="490" width="4.71" height="8" fill="#c870b0"/><rect x="541.23" y="490" width="4.71" height="8" fill="#a890d0"/><rect x="546.43" y="490" width="4.71" height="8" fill="#c8a8d0"/><rect x="551.64" y="490" width="4.71" height="8" fill="#f0c8e0"/><rect x="556.85" y="490" width="4.71" height="8" fill="#501808"/><rect x="562.06" y="490" width="4.71" height="8" fill="#703020"/><rect x="567.27" y="490" width="4.71" height="8" fill="#904010"/><rect x="572.47" y="490" width="4.71" height="8" fill="#a04810"/><rect x="577.68" y="490" width="4.71" height="8" fill="#c07020"/><rect x="582.89" y="490" width="4.71" height="8" fill="#b08060"/><rect x="588.10" y="490" width="4.71" height="8" fill="#e0b070"/><rect x="593.31" y="490" width="4.71" height="8" fill="#d8d0c8"/><rect x="598.51" y="490" width="4.71" height="8" fill="#d0d8d0"/><rect x="603.72" y="490" width="4.71" height="8" fill="#000000"/><rect x="608.93" y="490" width="4.71" height="8" fill="#2a2424"/><rect x="614.14" y="490" width="4.71" height="8" fill="#484848"/><rect x="619.34" y="490" width="4.71" height="8" fill="#606060"/><rect x="624.55" y="490" width="4.71" height="8" fill="#787878"/><rect x="629.76" y="490" width="4.71" height="8" fill="#909090"/><rect x="634.97" y="490" width="4.71" height="8" fill="#a8a8a8"/><rect x="640.18" y="490" width="4.71" height="8" fill="#b8b8b8"/><rect x="645.38" y="490" width="4.71" height="8" fill="#d0d0d0"/><rect x="650.59" y="490" width="4.71" height="8" fill="#e8e8e8"/></svg>
<svg class="a" style="left:186.700px;top:134.600px" width="500.400" height="330.200" viewBox="186.700 134.600 500.400 330.200">
<rect x="186" y="134" width="502" height="332" fill="#cfeaf6"/>
<path d="M186 134H743.5V247.8Q719.9 264.6 696.3 247.8Q672.7 264.6 649.1 247.8Q625.5 264.6 601.9 247.8Q578.3 264.6 554.7 247.8Q531.1 264.6 507.5 247.8Q483.9 264.6 460.3 247.8Q436.7 264.6 413.1 247.8Q389.5 264.6 365.9 247.8Q342.3 264.6 318.7 247.8Q295.1 264.6 271.5 247.8Q247.9 264.6 224.3 247.8Q200.7 264.6 177.1 247.8V134Z" fill="#3f90cf"/>
<path d="M186 134H743.5V246.3Q719.9 261.9 696.3 246.3Q672.7 261.9 649.1 246.3Q625.5 261.9 601.9 246.3Q578.3 261.9 554.7 246.3Q531.1 261.9 507.5 246.3Q483.9 261.9 460.3 246.3Q436.7 261.9 413.1 246.3Q389.5 261.9 365.9 246.3Q342.3 261.9 318.7 246.3Q295.1 261.9 271.5 246.3Q247.9 261.9 224.3 246.3Q200.7 261.9 177.1 246.3V134Z" fill="#8ccdef"/>
<path d="M186 134H743.5V240.4Q719.9 258.6 696.3 240.4Q672.7 258.6 649.1 240.4Q625.5 258.6 601.9 240.4Q578.3 258.6 554.7 240.4Q531.1 258.6 507.5 240.4Q483.9 258.6 460.3 240.4Q436.7 258.6 413.1 240.4Q389.5 258.6 365.9 240.4Q342.3 258.6 318.7 240.4Q295.1 258.6 271.5 240.4Q247.9 258.6 224.3 240.4Q200.7 258.6 177.1 240.4V134Z" fill="#f3ee7c"/>
<path d="M186 134H743.5V238.0Q719.9 256.0 696.3 238.0Q672.7 256.0 649.1 238.0Q625.5 256.0 601.9 238.0Q578.3 256.0 554.7 238.0Q531.1 256.0 507.5 238.0Q483.9 256.0 460.3 238.0Q436.7 256.0 413.1 238.0Q389.5 256.0 365.9 238.0Q342.3 256.0 318.7 238.0Q295.1 256.0 271.5 238.0Q247.9 256.0 224.3 238.0Q200.7 256.0 177.1 238.0V134Z" fill="#0a5ea6"/>
<path d="M186 134H743.5V235.5Q719.9 254.3 696.3 235.5Q672.7 254.3 649.1 235.5Q625.5 254.3 601.9 235.5Q578.3 254.3 554.7 235.5Q531.1 254.3 507.5 235.5Q483.9 254.3 460.3 235.5Q436.7 254.3 413.1 235.5Q389.5 254.3 365.9 235.5Q342.3 254.3 318.7 235.5Q295.1 254.3 271.5 235.5Q247.9 254.3 224.3 235.5Q200.7 254.3 177.1 235.5V134Z" fill="#1a9bc0"/>
<path d="M190 146.700H351" stroke="#d4eef5" stroke-width="1" stroke-dasharray="4.200 1.800"/>
<path d="M295.8 182.7L295.2 181.5L294.6 180.3L293.7 179.2L292.8 178.3L291.7 177.5L290.5 176.8L289.3 176.3L288.0 175.9L286.6 175.7L285.3 175.7L283.9 175.9L282.6 176.3L281.4 176.8L280.2 177.5L279.1 178.3L278.1 179.3L277.6 178.1L276.9 176.4L276.0 174.8L275.0 173.2L274.0 171.7L272.8 170.3L271.6 169.0L270.2 167.7L268.8 166.6L267.3 165.5L265.8 164.5L264.1 163.7L262.5 162.9L260.8 162.3L259.0 161.8L257.2 161.3L255.4 161.0L253.6 160.9L251.8 160.8L250.0 160.9L248.1 161.0L246.3 161.3L244.5 161.8L242.8 162.3L241.1 162.9L239.4 163.7L237.8 164.5L236.2 165.5L234.8 166.6L233.3 167.7L232.0 169.0L230.8 170.3L229.6 171.7L228.5 173.2L227.6 174.8L226.7 176.4L225.9 178.1L225.4 179.4L224.2 179.2L221.7 179.0L219.3 179.2L217.0 179.7L214.7 180.4L212.5 181.5L210.5 182.8L209.6 183.6L207.9 185.3L206.4 187.2L205.2 189.3L204.3 191.5L203.7 193.9L203.4 196.3L203.4 198.7L203.7 201.1L204.3 203.4L205.2 205.6L205.8 206.7L207.1 208.7L208.7 210.5L210.5 212.1L212.5 213.4L213.6 214.0L214.7 214.5L217.0 215.3L219.3 215.7L220.5 215.9L223.0 215.9L224.2 215.7L226.5 215.3L228.7 214.5L230.1 217.0L231.0 218.2L233.0 220.4L235.2 222.4L237.7 224.0L239.0 224.7L241.8 225.9L244.6 226.6L246.1 226.9L249.1 227.1L250.6 227.0L253.5 226.6L256.4 225.9L259.2 224.7L260.5 224.0L263.0 222.4L265.2 220.4L267.2 218.2L268.8 215.7L270.1 213.0L271.1 210.2L271.5 208.6L271.8 208.3L272.5 209.5L273.5 210.8L274.1 211.4L275.3 212.5L275.9 213.0L277.4 213.8L278.9 214.4L280.4 214.8L282.0 215.0L283.7 215.0L284.5 215.0L286.1 214.6L287.6 214.1L288.3 213.8L289.8 213.0L291.0 212.0L292.2 210.8L292.7 210.2L293.6 208.9L294.3 207.4L294.9 205.9L295.0 205.1L295.3 203.5L295.3 202.6L295.2 201.0L294.9 199.4L294.3 197.9L293.6 196.4L292.7 195.1L292.1 194.4L293.3 193.4L294.3 192.2L294.7 194.3L295.3 196.0L295.6 196.8L296.5 198.3L297.6 199.7L298.8 201.0L299.5 201.5L301.0 202.5L302.6 203.3L304.2 203.8L305.1 204.0L306.8 204.3L308.6 204.3L310.3 204.0L311.2 203.8L312.9 203.3L314.4 202.5L315.9 201.5L317.2 200.4L318.4 199.0L318.9 198.3L319.4 197.6L320.1 196.0L320.7 194.3L320.9 193.5L321.1 192.6L321.2 190.8L321.1 189.1L320.9 188.2L320.7 187.3L320.1 185.7L319.8 184.9L318.9 183.4L318.4 182.6L317.2 181.3L315.9 180.2L315.2 179.6L314.4 179.2L312.9 178.4L312.0 178.1L310.3 177.6L308.6 177.4L306.8 177.4L305.9 177.5L304.2 177.8L302.6 178.4L301.0 179.2L300.2 179.6L299.5 180.2L298.2 181.3L297.0 182.6L296.1 184.0L295.8 182.7Z" fill="#62b9d4" stroke="#8ccde0" stroke-width=".8" stroke-linejoin="round"/>
<path d="M324.6 194.5L323.4 193.7L322.2 193.1L320.8 192.6L318.8 192.3L317.4 192.3L315.3 192.6L313.9 193.1L312.5 193.8L311.7 192.5L310.0 190.3L309.1 189.3L306.9 187.4L304.6 185.8L303.4 185.2L300.8 184.1L299.4 183.7L296.6 183.1L293.8 183.0L291.0 183.1L288.3 183.7L285.6 184.6L283.1 185.8L281.9 186.6L279.6 188.3L277.6 190.3L276.7 191.4L275.2 193.7L274.3 195.4L273.5 195.4L272.0 195.5L269.9 196.0L267.8 196.9L266.6 197.7L265.5 198.7L264.5 199.8L263.7 201.1L263.0 202.4L262.5 203.8L262.2 205.3L262.1 206.8L262.2 208.3L262.5 209.7L263.3 211.8L264.5 213.7L266.0 215.3L267.2 216.3L268.5 217.0L269.9 217.6L272.0 218.1L274.3 218.1L275.8 218.0L276.8 217.7L277.6 218.7L279.3 220.4L279.9 221.5L281.0 222.9L282.3 224.2L282.9 224.7L284.4 225.7L285.2 226.1L286.8 226.8L288.5 227.2L290.3 227.5L292.0 227.5L293.8 227.2L295.5 226.8L297.1 226.1L297.9 225.6L299.4 225.3L300.8 224.9L303.4 223.8L305.8 222.4L308.0 220.7L309.3 221.5L310.8 222.3L311.7 222.6L313.4 223.1L315.1 223.3L316.9 223.3L318.6 223.1L319.5 222.9L321.1 222.3L322.7 221.5L324.2 220.6L325.5 219.4L326.7 218.1L327.6 216.6L328.4 215.0L329.0 213.3L330.1 213.4L331.3 213.3L333.2 212.9L334.9 212.1L336.5 211.0L337.8 209.6L338.5 208.5L339.3 206.8L339.6 205.6L339.8 204.3L339.8 203.0L339.6 201.8L339.3 200.5L338.5 198.8L337.8 197.7L337.0 196.8L336.0 196.0L334.9 195.2L333.8 194.7L332.6 194.3L331.3 194.0L329.4 194.0L328.2 194.1L326.9 194.5L325.4 195.2L324.6 194.5Z" fill="#62b9d4" stroke="#93d1e3" stroke-width=".8" stroke-linejoin="round"/>
<path transform="translate(462 161.8) scale(0.5454545454545454)" d="M-11 .6C-7.500 -1.600 -2.500 -1.200 .800 2.200C3 -.800 6.500 -2.300 11 -2.600" fill="none" stroke="#fff" stroke-width="1.500" stroke-linecap="round"/>
<path transform="translate(391.5 194.5) scale(1.0)" d="M-11 .6C-7.500 -1.600 -2.500 -1.200 .800 2.200C3 -.800 6.500 -2.300 11 -2.600" fill="none" stroke="#fff" stroke-width="1.500" stroke-linecap="round"/>
<path transform="translate(368 213.2) scale(1.0)" d="M-11 .6C-7.500 -1.600 -2.500 -1.200 .800 2.200C3 -.800 6.500 -2.300 11 -2.600" fill="none" stroke="#fff" stroke-width="1.500" stroke-linecap="round"/>
<path transform="translate(451.4 208.7) scale(1.0)" d="M-11 .6C-7.500 -1.600 -2.500 -1.200 .800 2.200C3 -.800 6.500 -2.300 11 -2.600" fill="none" stroke="#fff" stroke-width="1.500" stroke-linecap="round"/>
<path transform="translate(489 228) scale(0.5)" d="M-11 .6C-7.500 -1.600 -2.500 -1.200 .800 2.200C3 -.800 6.500 -2.300 11 -2.600" fill="none" stroke="#fff" stroke-width="1.500" stroke-linecap="round"/>
<g>
<path d="M398 136.200l3-.600 9 5.400-8 1.200z" fill="#f3ee7c"/>
<path d="M350 136.200l4-.800 20 8.600-8 4-11 .5z" fill="#8ec9e4"/>
<path d="M352.400 138.400l11 7.600-8 2z" fill="#f3ee7c"/>
<path d="M352 147l22-3 26-2.400 26-3.200c9-1.400 17-2 22-1.400 5 .6 9 2 10 4 1 1.400.5 2.600-2 4-4 2.200-10 4-18 6l-14 2.600c-8 1.200-16 1.600-24 1.400l-20-1.400-20-2-14-2c-1.500-.4-1.500-1.600 0-2z" fill="#8ec9e4"/>
<path d="M360 149.600h40l24-2 20-3.200 17.400-2.200c.6.800.2 1.800-1.400 2.800-4 2.200-10 4-18 6l-14 2.600c-8 1.200-16 1.600-24 1.400l-20-1.400-20-2z" fill="#f3ee7c"/>
<path d="M345 149l15-.6 6 1.600-12 1.800-9-1.600z" fill="#8ec9e4"/>
<path d="M426 149.500l-22-.5-48 8 4.500 3.800 24-3.800 40-4.500z" fill="#8ec9e4"/>
<path d="M383.500 155c-1.800 2.200-1 5.400 2.500 6h8.500c3.600-.6 4.400-3.800 2.600-6z" fill="#8ec9e4"/>
<rect x="383.700" y="157" width="1.500" height="2.600" fill="#9a5b4a"/>
<path d="M402 149.600l20-2.400c2 .3 2 2.300 0 2.800l-14 2.400z" fill="#8ec9e4"/>
<ellipse cx="451" cy="139.300" rx="2.600" ry="1.300" fill="#fff" transform="rotate(-12 451 139.300)"/>
</g>
<rect x="487.500" y="134" width="189" height="89.600" fill="#a3d5e4"/>
<rect x="491.400" y="134" width="181.500" height="86" fill="#b9e0ec" stroke="#d6eef5" stroke-width=".8"/>
<path d="M510.5 142.6H550.5V167.6A14 14 0 0 1 536.5 181.6H496.5V156.6A14 14 0 0 1 510.5 142.6Z" fill="#fdd26e"/>
<path d="M510.8 144.4H548.7V167.3A12.5 12.5 0 0 1 536.2 179.8H498.3V156.9A12.5 12.5 0 0 1 510.8 144.4Z" fill="none" stroke="#fff6dc" stroke-width=".8"/>
<path d="M569 142.6H609V167.6A14 14 0 0 1 595 181.6H555V156.6A14 14 0 0 1 569 142.6Z" fill="#2ea9bf"/>
<path d="M569.3 144.4H607.1999999999999V167.3A12.5 12.5 0 0 1 594.6999999999999 179.8H556.8V156.9A12.5 12.5 0 0 1 569.3 144.4Z" fill="none" stroke="#c4e8ee" stroke-width=".8"/>
<path d="M627 142.6H666.6V167.6A14 14 0 0 1 652.6 181.6H613V156.6A14 14 0 0 1 627 142.6Z" fill="#1fc9a8"/>
<path d="M627.3 144.4H664.8V167.3A12.5 12.5 0 0 1 652.3 179.8H614.8V156.9A12.5 12.5 0 0 1 627.3 144.4Z" fill="none" stroke="#c6f4e8" stroke-width=".8"/>
<text x="523.5" y="161.200" text-anchor="middle" font-size="6.050" fill="#fff" fill-opacity="1" font-family="Liberation Sans, sans-serif">Replace your text</text>
<text x="523.5" y="167.600" text-anchor="middle" font-size="6.050" fill="#fff" fill-opacity="1" font-family="Liberation Sans, sans-serif">here!</text>
<text x="582" y="161.200" text-anchor="middle" font-size="6.050" fill="#fff" fill-opacity="1" font-family="Liberation Sans, sans-serif">Replace your text</text>
<text x="582" y="167.600" text-anchor="middle" font-size="6.050" fill="#fff" fill-opacity="1" font-family="Liberation Sans, sans-serif">here!</text>
<text x="639.8" y="161.200" text-anchor="middle" font-size="6.050" fill="#fff" fill-opacity="1" font-family="Liberation Sans, sans-serif">Replace your text</text>
<text x="639.8" y="167.600" text-anchor="middle" font-size="6.050" fill="#fff" fill-opacity="1" font-family="Liberation Sans, sans-serif">here!</text>
<path d="M519.8 184h7.400M519.8 185.900h7.400M519.8 187.800h7.400" stroke="#fdd26e" stroke-width=".9"/>
<path d="M516.5 190h14l-7 8.400z" fill="#fdd26e"/>
<path d="M578.3 184h7.400M578.3 185.900h7.400M578.3 187.800h7.400" stroke="#2ea9bf" stroke-width=".9"/>
<path d="M575 190h14l-7 8.400z" fill="#2ea9bf"/>
<path d="M636.3 184h7.400M636.3 185.900h7.400M636.3 187.800h7.400" stroke="#1fc9a8" stroke-width=".9"/>
<path d="M633 190h14l-7 8.400z" fill="#1fc9a8"/>
<rect x="501" y="200.5" width="45.6" height="14.1" fill="#fdd26e"/>
<rect x="502.5" y="202.0" width="42.6" height="11.1" fill="none" stroke="#fff0c4" stroke-width=".7"/>
<text x="523.8" y="209.75" text-anchor="middle" font-size="6.200" fill="#fff" font-family="Liberation Sans, sans-serif">29%</text>
<rect x="559.5" y="200.5" width="44.5" height="14.1" fill="#2ea9bf"/>
<rect x="561.0" y="202.0" width="41.5" height="11.1" fill="none" stroke="#a8dce6" stroke-width=".7"/>
<text x="581.75" y="209.75" text-anchor="middle" font-size="6.200" fill="#fff" font-family="Liberation Sans, sans-serif">40%</text>
<rect x="617" y="202" width="46" height="14" fill="#1fc9a8"/>
<rect x="618.5" y="203.5" width="43" height="11" fill="none" stroke="#a6ecdc" stroke-width=".7"/>
<text x="640.0" y="211.2" text-anchor="middle" font-size="6.200" fill="#fff" font-family="Liberation Sans, sans-serif">31%</text>
<path d="M268.1 321L268.10 279.00A42 42 0 0 1 304.47 342.00Z" fill="#8fd15a"/>
<path d="M268.1 321L304.47 342.00A42 42 0 0 1 268.10 363.00Z" fill="#fbd3e6"/>
<path d="M268.1 321L268.10 363.00A42 42 0 0 1 231.73 342.00Z" fill="#a98bd0"/>
<path d="M268.1 321L231.73 342.00A42 42 0 0 1 231.73 300.00Z" fill="#1fc9a8"/>
<path d="M268.1 321L231.73 300.00A42 42 0 0 1 268.10 279.00Z" fill="#1a9bc0"/>
<text x="288" y="311.5" text-anchor="middle" font-size="6.800" fill="#333" font-family="Liberation Sans, sans-serif">240</text>
<text x="279" y="344.5" text-anchor="middle" font-size="6.800" fill="#333" font-family="Liberation Sans, sans-serif">120</text>
<text x="255.5" y="344.5" text-anchor="middle" font-size="6.800" fill="#333" font-family="Liberation Sans, sans-serif">120</text>
<text x="244.5" y="323.5" text-anchor="middle" font-size="6.800" fill="#333" font-family="Liberation Sans, sans-serif">120</text>
<text x="255.5" y="303" text-anchor="middle" font-size="6.800" fill="#333" font-family="Liberation Sans, sans-serif">120</text>
<circle cx="336.400" cy="295.80" r="3.400" fill="#8fd15a"/>
<text x="345.200" y="298.30" font-size="7.050" fill="#333" font-family="Liberation Sans, sans-serif">Category 1</text>
<circle cx="336.400" cy="306.02" r="3.400" fill="#fbd3e6"/>
<text x="345.200" y="308.52" font-size="7.050" fill="#333" font-family="Liberation Sans, sans-serif">Category 2</text>
<circle cx="336.400" cy="316.24" r="3.400" fill="#a98bd0"/>
<text x="345.200" y="318.74" font-size="7.050" fill="#333" font-family="Liberation Sans, sans-serif">Category 3</text>
<circle cx="336.400" cy="326.46" r="3.400" fill="#1fc9a8"/>
<text x="345.200" y="328.96" font-size="7.050" fill="#333" font-family="Liberation Sans, sans-serif">Category 4</text>
<circle cx="336.400" cy="336.68" r="3.400" fill="#1a9bc0"/>
<text x="345.200" y="339.18" font-size="7.050" fill="#333" font-family="Liberation Sans, sans-serif">Category 5</text>
<path transform="translate(540.8 272.6) scale(0.93)" d="M6.500 0c0 .8-.8 1.100-1.800 1.100h-2.700l-3 4.400h-1.500l1.600-4.400h-2.600l-1.300 1.600h-1.200l.7-2.700-.7-2.700h1.200l1.300 1.600h2.600l-1.600-4.400h1.500l3 4.400h2.700c1 0 1.800.3 1.800 1.100z" fill="#fff"/>
<path transform="translate(540.8 290.7) scale(0.93)" d="M6.500 0c0 .8-.8 1.100-1.800 1.100h-2.700l-3 4.400h-1.500l1.600-4.400h-2.600l-1.300 1.600h-1.200l.7-2.700-.7-2.700h1.200l1.300 1.600h2.600l-1.600-4.400h1.500l3 4.400h2.700c1 0 1.800.3 1.800 1.100z" fill="#fff"/>
<path transform="translate(540.8 308.4) scale(0.93)" d="M6.500 0c0 .8-.8 1.100-1.800 1.100h-2.700l-3 4.400h-1.500l1.600-4.400h-2.600l-1.300 1.600h-1.200l.7-2.700-.7-2.700h1.200l1.300 1.600h2.600l-1.600-4.400h1.500l3 4.400h2.700c1 0 1.800.3 1.800 1.100z" fill="#fff"/>
<path transform="translate(540.8 326) scale(0.93)" d="M6.500 0c0 .8-.8 1.100-1.800 1.100h-2.700l-3 4.400h-1.500l1.600-4.400h-2.600l-1.300 1.600h-1.200l.7-2.700-.7-2.700h1.200l1.300 1.600h2.600l-1.600-4.400h1.500l3 4.400h2.700c1 0 1.800.3 1.800 1.100z" fill="#fff"/>
<path transform="translate(540.8 344.2) scale(0.93)" d="M6.500 0c0 .8-.8 1.100-1.800 1.100h-2.700l-3 4.400h-1.500l1.600-4.400h-2.600l-1.300 1.600h-1.200l.7-2.700-.7-2.700h1.200l1.300 1.600h2.600l-1.600-4.400h1.500l3 4.400h2.700c1 0 1.800.3 1.800 1.100z" fill="#fff"/>
<rect x="560.6" y="290.4" width="5.900" height="57.2" fill="#43a4c4"/>
<text x="563.6" y="288.8" text-anchor="middle" font-size="5.600" fill="#333" font-family="Liberation Sans, sans-serif">66</text>
<rect x="576.6" y="317.3" width="5.900" height="30.3" fill="#fbd870"/>
<text x="579.6" y="315.7" text-anchor="middle" font-size="5.600" fill="#333" font-family="Liberation Sans, sans-serif">35</text>
<rect x="593" y="302.6" width="5.900" height="45.0" fill="#43a4c4"/>
<text x="596" y="301.0" text-anchor="middle" font-size="5.600" fill="#333" font-family="Liberation Sans, sans-serif">52</text>
<rect x="608.3" y="280.1" width="5.900" height="67.5" fill="#fbd870"/>
<text x="611.3" y="278.5" text-anchor="middle" font-size="5.600" fill="#333" font-family="Liberation Sans, sans-serif">78</text>
<rect x="624.6" y="300.0" width="5.900" height="47.6" fill="#43a4c4"/>
<text x="627.6" y="298.4" text-anchor="middle" font-size="5.600" fill="#333" font-family="Liberation Sans, sans-serif">55</text>
<rect x="640.6" y="309.5" width="5.900" height="38.1" fill="#fbd870"/>
<text x="643.6" y="307.9" text-anchor="middle" font-size="5.600" fill="#333" font-family="Liberation Sans, sans-serif">44</text>
<g fill="#3b3838"><circle cx="563.5" cy="353" r="2.100"/><path d="M560.9 355.800h5.200l3 6.500-1.300.8-2.300-4.300v13.700h-1.700v-7.500h-.6v7.500h-1.700v-13.700l-2.300 4.300-1.300-.8z"/></g>
<g fill="#3b3838"><circle cx="579.5" cy="353" r="2.100"/><path d="M577.2 355.800h4.600l3 6.300-1.300.8-2-3.600 2.600 7.700h-2.300v5.500h-1.500v-5.500h-1.600v5.500h-1.500v-5.500h-2.300l2.600-7.700-2 3.600-1.300-.8z"/></g>
<g fill="#fbd174"><circle cx="596" cy="353" r="2.100"/><path d="M593.4 355.800h5.200l3 6.500-1.300.8-2.300-4.300v13.700h-1.700v-7.500h-.6v7.500h-1.700v-13.700l-2.300 4.300-1.300-.8z"/></g>
<g fill="#fbd174"><circle cx="611.5" cy="353" r="2.100"/><path d="M609.2 355.800h4.600l3 6.300-1.300.8-2-3.600 2.600 7.700h-2.300v5.500h-1.500v-5.500h-1.600v5.500h-1.500v-5.500h-2.300l2.600-7.700-2 3.600-1.300-.8z"/></g>
<g fill="#fff"><circle cx="627.5" cy="353" r="2.100"/><path d="M624.9 355.800h5.200l3 6.500-1.300.8-2.300-4.300v13.700h-1.700v-7.500h-.6v7.500h-1.700v-13.700l-2.300 4.300-1.300-.8z"/></g>
<g fill="#fff"><circle cx="643.5" cy="353" r="2.100"/><path d="M641.2 355.800h4.600l3 6.300-1.300.8-2-3.600 2.600 7.700h-2.300v5.500h-1.500v-5.500h-1.600v5.500h-1.500v-5.500h-2.300l2.600-7.700-2 3.600-1.300-.8z"/></g>
<rect x="544.600" y="254" width=".9" height="5" fill="#556"/>
<g id="scene"><g transform="translate(313.400 399) rotate(-18.200)"><rect x="0.60" y="-1.700" width="3" height="2.500" rx=".6" fill="#1dc7a8"/><rect x="5.35" y="-1.700" width="3" height="2.500" rx=".6" fill="#1dc7a8"/><rect x="10.10" y="-1.700" width="3" height="2.500" rx=".6" fill="#1dc7a8"/><rect x="14.85" y="-1.700" width="3" height="2.500" rx=".6" fill="#1dc7a8"/><rect x="19.60" y="-1.700" width="3" height="2.500" rx=".6" fill="#1dc7a8"/><rect x="24.35" y="-1.700" width="3" height="2.500" rx=".6" fill="#1dc7a8"/><rect x="29.10" y="-1.700" width="3" height="2.500" rx=".6" fill="#1dc7a8"/><rect x="33.85" y="-1.700" width="3" height="2.500" rx=".6" fill="#1dc7a8"/><rect x="38.60" y="-1.700" width="3" height="2.500" rx=".6" fill="#1dc7a8"/><rect x="43.35" y="-1.700" width="3" height="2.500" rx=".6" fill="#1dc7a8"/><rect x="48.10" y="-1.700" width="3" height="2.500" rx=".6" fill="#1dc7a8"/><path d="M0 0H51.600L54.800 9.300V11.500L52.900 13.500V72H34.300V27a7.300 7.300 0 0 0 -14.600 0V72H0V13.500L-3.500 11.500V9.300Z" fill="#1dc7a8"/><path d="M1.500 2.400h48.500" stroke="#e8f8f4" stroke-width=".7"/><path d="M1 8.200h51" stroke="#e8f8f4" stroke-width=".7" stroke-dasharray="2 1.300"/><path d="M-1 12.600h54.500" stroke="#17a98f" stroke-width=".8"/><rect x="4.500" y="15" width="12.500" height="9" fill="none" stroke="#d8f4ee" stroke-width=".7"/><rect x="6" y="16.500" width="9.500" height="6" fill="none" stroke="#d8f4ee" stroke-width=".5"/><rect x="37" y="15" width="12.500" height="9" fill="none" stroke="#d8f4ee" stroke-width=".7"/><rect x="38.500" y="16.500" width="9.500" height="6" fill="none" stroke="#d8f4ee" stroke-width=".5"/><path d="M1 27.600h18.500M1 29.300h18.500M34.500 27.600h18M34.500 29.300h18M1 41.300h18.500M1 43h18.500M34.500 41.300h18M34.500 43h18" stroke="#d8f4ee" stroke-width=".6"/></g>
<circle cx="437" cy="699.9" r="273.5" fill="#fff"/>
<circle cx="437" cy="699.9" r="270.40000000000003" fill="#fbd374"/>
<clipPath id="gc"><circle cx="437" cy="699.9" r="270.40000000000003"/></clipPath>
<path clip-path="url(#gc)" d="M428.100 425L429 433.200 424.300 435.400 415.700 436.400 410.400 438.600 405 439.600 401.800 446.100 396.400 442.900 392.100 442.900 390 446.100 388.900 453.600 386.800 460 381.400 463.200 375 463.200 372.900 466H482.600L484.300 456.800 486.400 454.600 488.600 451.400 484.300 449.300 483.200 445 481.100 441.800 476.800 439.600 474.600 436.400 475.700 425Z" fill="#13679f" stroke="#13679f" stroke-width="1" stroke-linejoin="round"/>
<path d="M436.800 429v36M349 444l11 21M523.500 444l-6 21" stroke="#9fd0e6" stroke-width=".6" fill="none"/>
<g transform="translate(238.700 413.300) rotate(-38)"><rect x="-19" y="10.600" width="38" height="90" fill="#1dc7a8"/><rect x="-7.200" y="0" width="14.400" height="11" fill="#1dc7a8"/><rect x="-9.800" y="-1.300" width="19.600" height="2.600" rx="1.300" fill="#1dc7a8"/><rect x="-3.7" y="2.600" width="3" height="6.800" rx="1.400" fill="#cfeaf6"/><rect x="0.7" y="2.600" width="3" height="6.800" rx="1.400" fill="#cfeaf6"/><rect x="-21" y="8.7" width="42" height="3.800" rx="1.900" fill="#1dc7a8"/><rect x="-17.25" y="13.6" width="3.400" height="9.400" rx="1.400" fill="#cfeaf6"/><rect x="-12.75" y="13.6" width="3.400" height="9.400" rx="1.400" fill="#cfeaf6"/><rect x="-8.25" y="13.6" width="3.400" height="9.400" rx="1.400" fill="#cfeaf6"/><rect x="-3.75" y="13.6" width="3.400" height="9.400" rx="1.400" fill="#cfeaf6"/><rect x="0.75" y="13.6" width="3.400" height="9.400" rx="1.400" fill="#cfeaf6"/><rect x="5.25" y="13.6" width="3.400" height="9.400" rx="1.400" fill="#cfeaf6"/><rect x="9.75" y="13.6" width="3.400" height="9.400" rx="1.400" fill="#cfeaf6"/><rect x="14.25" y="13.6" width="3.400" height="9.400" rx="1.400" fill="#cfeaf6"/><rect x="-21" y="23.3" width="42" height="3.800" rx="1.900" fill="#1dc7a8"/><rect x="-17.25" y="28.2" width="3.400" height="9.400" rx="1.400" fill="#cfeaf6"/><rect x="-12.75" y="28.2" width="3.400" height="9.400" rx="1.400" fill="#cfeaf6"/><rect x="-8.25" y="28.2" width="3.400" height="9.400" rx="1.400" fill="#cfeaf6"/><rect x="-3.75" y="28.2" width="3.400" height="9.400" rx="1.400" fill="#cfeaf6"/><rect x="0.75" y="28.2" width="3.400" height="9.400" rx="1.400" fill="#cfeaf6"/><rect x="5.25" y="28.2" width="3.400" height="9.400" rx="1.400" fill="#cfeaf6"/><rect x="9.75" y="28.2" width="3.400" height="9.400" rx="1.400" fill="#cfeaf6"/><rect x="14.25" y="28.2" width="3.400" height="9.400" rx="1.400" fill="#cfeaf6"/><rect x="-21" y="37.9" width="42" height="3.800" rx="1.900" fill="#1dc7a8"/><rect x="-17.25" y="42.8" width="3.400" height="9.400" rx="1.400" fill="#cfeaf6"/><rect x="-12.75" y="42.8" width="3.400" height="9.400" rx="1.400" fill="#cfeaf6"/><rect x="-8.25" y="42.8" width="3.400" height="9.400" rx="1.400" fill="#cfeaf6"/><rect x="-3.75" y="42.8" width="3.400" height="9.400" rx="1.400" fill="#cfeaf6"/><rect x="0.75" y="42.8" width="3.400" height="9.400" rx="1.400" fill="#cfeaf6"/><rect x="5.25" y="42.8" width="3.400" height="9.400" rx="1.400" fill="#cfeaf6"/><rect x="9.75" y="42.8" width="3.400" height="9.400" rx="1.400" fill="#cfeaf6"/><rect x="14.25" y="42.8" width="3.400" height="9.400" rx="1.400" fill="#cfeaf6"/><rect x="-21" y="52.5" width="42" height="3.800" rx="1.900" fill="#1dc7a8"/><rect x="-17.25" y="57.4" width="3.400" height="9.400" rx="1.400" fill="#cfeaf6"/><rect x="-12.75" y="57.4" width="3.400" height="9.400" rx="1.400" fill="#cfeaf6"/><rect x="-8.25" y="57.4" width="3.400" height="9.400" rx="1.400" fill="#cfeaf6"/><rect x="-3.75" y="57.4" width="3.400" height="9.400" rx="1.400" fill="#cfeaf6"/><rect x="0.75" y="57.4" width="3.400" height="9.400" rx="1.400" fill="#cfeaf6"/><rect x="5.25" y="57.4" width="3.400" height="9.400" rx="1.400" fill="#cfeaf6"/><rect x="9.75" y="57.4" width="3.400" height="9.400" rx="1.400" fill="#cfeaf6"/><rect x="14.25" y="57.4" width="3.400" height="9.400" rx="1.400" fill="#cfeaf6"/><rect x="-21" y="67.1" width="42" height="3.800" rx="1.900" fill="#1dc7a8"/><rect x="-21" y="81.7" width="42" height="3.800" rx="1.900" fill="#1dc7a8"/></g>
<path d="M305.200 433.200l2.400-1 10 22.600-2.400 1z" fill="#5a3628"/>
<rect x="295.250" y="434.250" width="17" height="3.800" rx="1.900" fill="#f06a6a" transform="rotate(-24 303.750 436.150)"/>
<rect x="302.650" y="434.650" width="18.400" height="4" rx="2" fill="#f8c020" transform="rotate(-23.400 311.850 436.650)"/>
<rect x="297.900" y="441.200" width="18.300" height="3.600" rx="1.800" fill="#80b872" transform="rotate(-19.600 307.050 443)"/>
<g transform="rotate(-9 391.500 414)"><path d="M391.500 398.200c-5.500 9-5 22 0 31.500c5-9.500 5.500-22.500 0-31.500z" fill="#a4c9ef"/><path d="M391.300 399.500c-2.600 5-3 9.500-2 14l2 3.500 1-9 1.300 6c1.200-4.500.2-10-2.300-14.500z" fill="#fff"/><path d="M391.600 416v12" stroke="#fff" stroke-width=".8"/></g>
<g fill="#1dc7a8"><path d="M436.200 310.500l.75 22h-1.500z"/><path d="M435.300 330.500h1.800l3.200 11.500h-8.200z"/><rect x="429.500" y="341.400" width="13.400" height="3"/><rect x="427.700" y="343.600" width="17.600" height="4.700"/><path d="M430.800 348h10.800l4.600 38.500h-20z"/><rect x="421.300" y="385.900" width="31.400" height="4.800"/><path d="M424.500 390.500h25.500l5.400 10.500h-36.300z"/><rect x="415.900" y="400.600" width="41.300" height="4.800"/><path d="M419 405.200h35.600l12.900 23.800h-61.900z"/></g><path d="M430.200 391.200h14.200l3.400 8.900h-21.200z" fill="#cfeaf6"/><path d="M421.300 429.800c0-9.600 6.800-17 15.300-17s15.300 7.400 15.300 17z" fill="#cfeaf6"/><rect x="432.90" y="349.7" width="2.90" height="2.400" fill="#cfeaf6"/><rect x="436.60" y="349.7" width="2.90" height="2.400" fill="#cfeaf6"/><rect x="432.48" y="354.9" width="3.32" height="2.400" fill="#cfeaf6"/><rect x="436.60" y="354.9" width="3.32" height="2.400" fill="#cfeaf6"/><rect x="432.06" y="360.1" width="3.74" height="2.400" fill="#cfeaf6"/><rect x="436.60" y="360.1" width="3.74" height="2.400" fill="#cfeaf6"/><rect x="431.64" y="365.3" width="4.16" height="2.400" fill="#cfeaf6"/><rect x="436.60" y="365.3" width="4.16" height="2.400" fill="#cfeaf6"/><rect x="431.22" y="370.5" width="4.58" height="2.400" fill="#cfeaf6"/><rect x="436.60" y="370.5" width="4.58" height="2.400" fill="#cfeaf6"/><rect x="430.80" y="375.7" width="5.00" height="2.400" fill="#cfeaf6"/><rect x="436.60" y="375.7" width="5.00" height="2.400" fill="#cfeaf6"/><rect x="430.38" y="380.9" width="5.42" height="2.400" fill="#cfeaf6"/><rect x="436.60" y="380.9" width="5.42" height="2.400" fill="#cfeaf6"/>
<g transform="rotate(7 486 420)"><rect x="483.300" y="403.500" width="6" height="10" rx="1" fill="none" stroke="#f0a890" stroke-width="1.200"/><rect x="478.800" y="411.500" width="15" height="20" rx="1.500" fill="#f0a890"/><path d="M482.500 413v17M486.300 413v17M490 413v17" stroke="#f6c0ae" stroke-width=".6"/></g>
<g transform="translate(535.600 438.600) rotate(16)"><path d="M1 -53L2.200 -61 3 -53Z" fill="#1dc7a8"/><path d="M2 -56C-10 -48.500 -21.500 -28 -24.600 .600L.500 .600Z" fill="#1dc7a8"/><path d="M-29.500 -41.800c4-1 11 0 17.500 2.400l-2 2.600c-5-1.600-11-2.600-15-2.300-1.600-.5-1.800-2.100-.500-2.700z" fill="#1dc7a8"/><path d="M-.800 -50.500C-8.500 -43 -17.500 -27 -21.500 -.500M-1.300 -50L-3.200 0M-13 -26.100H-2.500M-17.500 -9.900H-3M-7.500 -41H-2" stroke="#d8f4ee" stroke-width=".8" fill="none"/><rect x="-30.200" y="0" width="39" height="3.200" fill="#1dc7a8"/><rect x="0" y="-3.500" width="8.600" height="4" fill="#1dc7a8"/><rect x="-37" y="2.500" width="50" height="4.300" fill="#1dc7a8"/><path d="M-36 4.600H12" stroke="#5fd9c2" stroke-width=".5"/></g>
<path d="M566 461.500c3.800-6 6-12.500 6.300-20l3 .3c.3 8-2 15-5.800 21.200z" fill="#a5622c"/>
<path d="M567.600 459l2.600 1M569.300 455.500l2.700 1M570.700 452l2.800.8M571.700 448.500l2.900.5M572.200 445l3 .3" stroke="#7d4419" stroke-width=".7"/>
<g transform="translate(573.300 440.500)"><path d="M0 0Q-9.8 3.1 -16.3 2.2Q-8.4 -7.3 0 0Z" fill="#1b9a50"/><path d="M0 0Q-9.1 -0.7 -10.0 -7.4Q-2.8 -8.2 0 0Z" fill="#1b9a50"/><path d="M0 0Q-6.7 -5.8 -2.2 -12.3Q2.9 -7.5 0 0Z" fill="#1b9a50"/><path d="M0 0Q1.3 -9.6 9.5 -8.5Q8.2 -2.6 0 0Z" fill="#1b9a50"/><path d="M0 0Q7.3 -9.2 14.9 3.9Q8.8 1.2 0 0Z" fill="#1b9a50"/><path d="M0 0Q-2.2 5.9 -9.5 12.0Q-7.5 -3.1 0 0Z" fill="#168a46"/><path d="M0 0Q7.9 -3.5 8.2 10.7Q1.9 5.1 0 0Z" fill="#168a46"/><path d="M0 0Q3.7 2.9 -0.5 8.0Q-3.3 2.3 0 0Z" fill="#168a46"/><circle r="2.600" fill="#1b9a50"/></g>
<g transform="translate(622.100 429.050) rotate(32.300)"><rect x="-9.200" y="4" width="18.400" height="80" fill="#1dc7a8"/><path d="M-7.2 7V84M-5.4 7V84M-3.6 7V84M-1.8 7V84M0.0 7V84M1.8 7V84M3.6 7V84M5.4 7V84M7.2 7V84" stroke="#d8f4ee" stroke-width=".75"/><path d="M-9.200 12.5H9.200M-9.200 18.7H9.200M-9.200 24.9H9.200M-9.200 31.1H9.200M-9.200 37.3H9.200M-9.200 43.5H9.200M-9.200 49.7H9.200M-9.200 55.9H9.200M-9.200 62.1H9.200M-9.200 68.3H9.200M-9.200 74.5H9.200M-9.200 80.7H9.200" stroke="#1dc7a8" stroke-width="1.300"/><rect x="-10.700" y="-5.600" width="21.400" height="11.200" fill="#1dc7a8"/><path d="M-9.500 -5.400C-6 -7 -4.500 -10 -3.500 -15L-1 -23 0 -29 1 -23 3.500 -15C4.500 -10 6 -7 9.500 -5.400Z" fill="#1dc7a8"/><circle r="4.300" fill="none" stroke="#d8f4ee" stroke-width=".9"/><path d="M0 0V-2.800" stroke="#d8f4ee" stroke-width=".8"/></g></g>
</svg>
<!-- status -->
<div class="a" style="left:0;top:499px;width:700px;height:23px;background:#2f55a0"></div>
<div class="t" style="left:9.500px;top:505px;font-size:8.600px;color:#fff;text-decoration:underline">https://www.edrawsoft.com/</div>
<div class="t" style="left:120.500px;top:505px;font-size:8.600px;color:#fff">Page 1/1</div>
<div class="t" style="left:607.500px;top:505px;font-size:9px;color:#fff">71%</div>
<svg class="a" style="left:470px;top:499px" width="230" height="23" viewBox="470 499 230 23">
 <rect x="479" y="504" width="11" height="11" fill="#8fa8dc"/>
 <rect x="481" y="506" width="7" height="7" fill="none" stroke="#fff" stroke-width=".9"/><rect x="482.300" y="507.300" width="4.400" height="4.400" fill="#b8c8ea"/>
 <rect x="492.800" y="505.500" width="7.600" height="8" fill="none" stroke="#fff" stroke-width=".9"/><path d="M495.500 505.500v8M495.500 508h5M495.500 510.500h5" stroke="#fff" stroke-width=".8"/>
 <path d="M505.500 505.500h8M506.500 506v4.500h6V506M509.500 510.500v3M507.500 514h4" stroke="#fff" stroke-width=".9" fill="none"/>
 <path d="M518.500 510h3.600" stroke="#fff" stroke-width="1"/>
 <path d="M529 509.800h58.500" stroke="#fff" stroke-width="1"/>
 <rect x="538" y="505.800" width="3.300" height="8.200" fill="#fff"/>
 <path d="M591.500 510h4.600M593.800 507.700v4.600" stroke="#fff" stroke-width="1"/>
 <path d="M629.800 509h2.800l-1.400 1.700z" fill="#b08a50"/>
 <rect x="638" y="506" width="7.500" height="7.500" fill="none" stroke="#fff" stroke-width="1"/><rect x="640" y="508" width="3.500" height="3.500" fill="#9fb4e0"/>
 <rect x="650.300" y="506" width="7.500" height="7.500" fill="none" stroke="#fff" stroke-width="1"/><path d="M654 506v7.500M650.300 509.700h7.500" stroke="#fff" stroke-width=".8"/><rect x="652" y="507.500" width="1.500" height="1.300" fill="#fff"/><rect x="655" y="507.500" width="1.500" height="1.300" fill="#fff"/><rect x="652" y="511" width="1.500" height="1.300" fill="#fff"/><rect x="655" y="511" width="1.500" height="1.300" fill="#fff"/>
 <rect x="662.500" y="505.800" width="7" height="6.500" fill="none" stroke="#dfe6f5" stroke-width=".7"/><circle cx="665.500" cy="508.800" r="2.300" fill="#9fb4e0" stroke="#fff" stroke-width="1"/><path d="M667.200 510.600l3 3.200" stroke="#fff" stroke-width="1.400"/>
 <g fill="#fff"><rect x="674.500" y="505.800" width="2" height="2"/><rect x="677.300" y="505.800" width="2" height="2"/><rect x="680.100" y="505.800" width="2" height="2"/><rect x="674.500" y="508.600" width="2" height="2"/><rect x="677.300" y="508.600" width="2" height="2"/><rect x="680.100" y="508.600" width="2" height="2"/><rect x="674.500" y="511.400" width="2" height="2"/><rect x="677.300" y="511.400" width="2" height="2"/><rect x="680.100" y="511.400" width="2" height="2"/></g>
 <g fill="#c8d4ee"><rect x="696" y="512" width="1.500" height="1.500"/><rect x="693.500" y="514.500" width="1.500" height="1.500"/><rect x="696" y="514.500" width="1.500" height="1.500"/><rect x="691" y="517" width="1.500" height="1.500"/><rect x="693.500" y="517" width="1.500" height="1.500"/><rect x="696" y="517" width="1.500" height="1.500"/></g>
</svg>
</body></html>
